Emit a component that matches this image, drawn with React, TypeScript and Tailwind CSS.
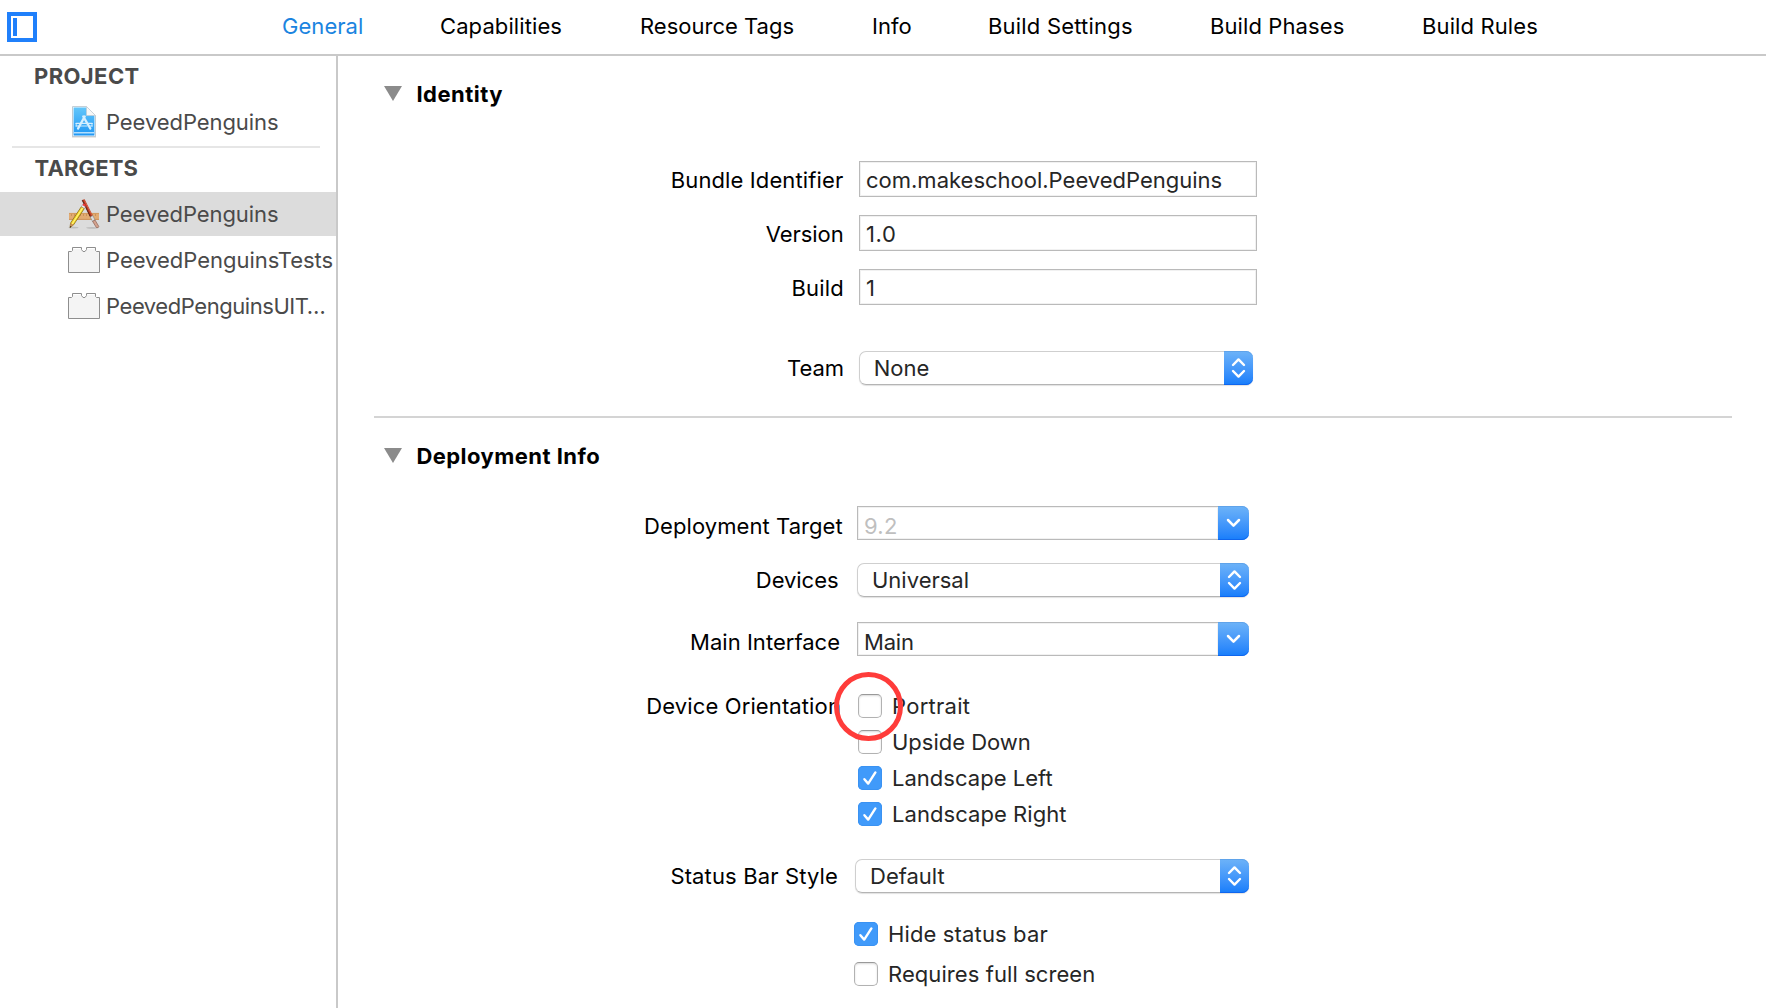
import type { ReactNode } from 'react';

const tabs = [
  { name: 'General', cls: 'w-[158px] tracking-[0.05px] text-[#1b84e0]' },
  { name: 'Capabilities', cls: 'w-[200px] tracking-[0.1px]' },
  { name: 'Resource Tags', cls: 'w-[232px]' },
  { name: 'Info', cls: 'w-[116px]' },
  { name: 'Build Settings', cls: 'w-[222px] tracking-[0.2px]' },
  { name: 'Build Phases', cls: 'w-[212px] tracking-[0.1px]' },
  { name: 'Build Rules', cls: 'tracking-[0.12px]' },
];

function PanelIcon() {
  return (
    <div className="h-[30px] w-[30px] border-4 border-[#2080fb] p-0.5">
      <div className="h-[18px] w-1 bg-[#2080fb]" />
    </div>
  );
}

function ProjectIcon() {
  return (
    <svg width="28" height="34" viewBox="0 0 28 34" className="relative top-px block">
      <defs>
        <linearGradient id="doc" x1="0" y1="0" x2="0" y2="1">
          <stop offset="0" stopColor="#63c6fa" />
          <stop offset="1" stopColor="#1f97f4" />
        </linearGradient>
      </defs>
      <path d="M2 2H17L26 11V32.4H2Z" fill="#9a9a9a" opacity="0.45" />
      <path d="M2.5 1.5H16.5L25.5 10.5V31.5H2.5Z" fill="#eef8ff" stroke="#b9c4cc" strokeWidth="0.8" />
      <path d="M3.6 2.6H16.4L24.4 10.6V30.4H3.6Z" fill="url(#doc)" />
      <path d="M16.5 1.5V10.5H25.5Z" fill="#f7f7f7" stroke="#c2ccd2" strokeWidth="0.7" />
      <path d="M4 27.8H24" stroke="#d9f0ff" strokeWidth="1.2" />
      <g stroke="#d5efff" fill="none" strokeLinecap="round">
        <path d="M14.8 11.4L8 23.6M13.2 11.4L20.4 23.6" strokeWidth="2.2" />
        <path d="M6 18.4H22.2M6 21H10M18.4 21H22.2" strokeWidth="1.2" />
        <path d="M6.2 18.4V21M22 18.4V21M11 21H17" strokeWidth="0.9" />
      </g>
    </svg>
  );
}

function AppIcon() {
  return (
    <svg width="32" height="32" viewBox="0 0 32 32" className="block">
      <ellipse cx="5.5" cy="29.6" rx="5" ry="0.9" fill="#000" opacity="0.14" />
      <ellipse cx="24" cy="29.8" rx="6" ry="0.9" fill="#000" opacity="0.14" />
      <rect x="1" y="15" width="30" height="6.8" fill="#e2ab72" />
      <path d="M1 15.4H31" stroke="#cf965a" strokeWidth="0.8" />
      <path d="M1 21.4H31" stroke="#c98a50" strokeWidth="0.8" />
      <path d="M3.5 16V18M6.5 16V18M9.5 16V18M12.5 16V18M15.5 16V18M18.5 16V18M21.5 16V18M24.5 16V18M27.5 16V18" stroke="#bd8650" strokeWidth="0.7" />
      <path d="M14 2L16.6 1.2L24.8 17.6L22.2 19Z" fill="#b5391f" />
      <path d="M14.2 2.2L22.4 18.8" stroke="#4a1b12" strokeWidth="0.9" />
      <path d="M16.4 2.4L24.2 17.6" stroke="#df6a4c" strokeWidth="0.8" />
      <path d="M22.2 19L24.8 17.6L27 22L24.6 23.4Z" fill="#dcdcdc" stroke="#777" strokeWidth="0.5" />
      <path d="M24.6 23.4L27 22L30.8 28.4Q30.6 30.4 28.4 29.6Z" fill="#d3a28e" stroke="#7f5344" strokeWidth="0.6" />
      <path d="M13.4 8.6L16.4 10.4L5.6 26.8L2 29.6L2.6 25Z" fill="#f8dd2c" stroke="#7a5a10" strokeWidth="0.7" />
      <path d="M14.6 10L4.2 26" stroke="#fff48a" strokeWidth="1" />
      <path d="M2.6 25L5.6 26.8L2 29.6Z" fill="#c98e58" />
      <path d="M2.1 28L3.4 28.7L1.9 29.8Z" fill="#2d2018" />
      <path d="M13.4 8.6L14.4 6.9L17.4 8.7L16.4 10.4Z" fill="#efefef" stroke="#888" strokeWidth="0.4" />
      <path d="M14.4 6.9Q15.2 5.2 16.8 6Q18.2 7 17.4 8.7Z" fill="#f03a3e" />
    </svg>
  );
}

function BrickIcon() {
  return (
    <svg width="32" height="26" viewBox="0 0 32 26" className="block">
      <path
        d="M0.5 25.5V4.5H3.5L4.5 3.5V0.5H13.5V2.5L15 4.5H17L18.5 2.5V0.5H27.5V3.5L28.5 4.5H31.5V25.5Z"
        fill="#f4f4f4"
        stroke="#8e8e8e"
      />
      <path d="M5.5 1.5H12.5M19.5 1.5H26.5" stroke="#fff" />
    </svg>
  );
}

function Target({ icon, name, cls = '', selected = false }: { icon: ReactNode; name: string; cls?: string; selected?: boolean }) {
  return (
    <div className={selected ? 'flex h-11 items-center bg-[#dcdcdc]' : 'flex h-11 items-center'}>
      <div className="ml-[68px] flex w-8 justify-center">{icon}</div>
      <span className={`ml-[6px] whitespace-nowrap ${cls}`}>{name}</span>
    </div>
  );
}

function Section({ title, cls }: { title: string; cls: string }) {
  return (
    <div className="flex pl-[46px]">
      <svg width="18" height="15" viewBox="0 0 18 15" className="mt-1.5 block">
        <path d="M0 0H18L9 15Z" fill="#8b8b8b" />
      </svg>
      <h2 className={`ml-[14.4px] font-bold ${cls}`}>{title}</h2>
    </div>
  );
}

function Row({ label, labelCls, children }: { label: string; labelCls: string; children: ReactNode }) {
  return (
    <div className="flex items-start">
      <label className={`text-right whitespace-nowrap ${labelCls}`}>{label}</label>
      {children}
    </div>
  );
}

function Field({ value, cls = '' }: { value: string; cls?: string }) {
  return (
    <div className="h-9 w-[398px] border border-[#bababa] pt-1 pl-[6px] text-[#262626] shadow-[inset_0_0_0_1px_#f1f1f1]">
      <div className={cls}>{value}</div>
    </div>
  );
}

const blue = 'bg-linear-to-b from-[#6db3f8] to-[#157dfb] shadow-[inset_0_1px_0_#5fa3ea,inset_0_-1px_0_#0f66ee]';

function Popup({ value, width, cls }: { value: string; width: string; cls: string }) {
  return (
    <div className={`flex h-[34px] rounded-[7px] shadow-[0_1px_1px_rgba(0,0,0,0.12)] ${width}`}>
      <div className="h-full flex-1 rounded-l-[7px] border border-r-0 border-[#cfcfcf] border-b-[#b4b4b4] pt-0.5 text-[#262626]">
        <div className={cls}>{value}</div>
      </div>
      <div className={`flex h-full w-[29px] items-center justify-center rounded-r-[7px] ${blue}`}>
        <svg width="15" height="22" viewBox="0 0 15 22" fill="none" stroke="#fff" strokeWidth="2.4" strokeLinecap="round" strokeLinejoin="round">
          <path d="M2 8L7.5 2.4L13 8M2 14L7.5 19.6L13 14" />
        </svg>
      </div>
    </div>
  );
}

function Combo({ value, cls }: { value: string; cls: string }) {
  return (
    <div className="flex h-[34px] w-[392px]">
      <div className="h-full flex-1 border border-r-0 border-[#bababa] pt-[5px] pl-[6px] shadow-[inset_0_0_0_1px_#f1f1f1]">
        <div className={cls}>{value}</div>
      </div>
      <div className={`flex h-full w-[31px] items-center justify-center rounded-r-[7px] ${blue}`}>
        <svg width="15" height="10" viewBox="0 0 15 10" fill="none" stroke="#fff" strokeWidth="2.5" strokeLinecap="round" strokeLinejoin="round">
          <path d="M2 2L7.5 7.6L13 2" />
        </svg>
      </div>
    </div>
  );
}

function Check({ label, checked = false, cls = '' }: { label: string; checked?: boolean; cls?: string }) {
  return (
    <div className="flex items-start text-[#262626]">
      {checked ? (
        <div className="mt-0.5 h-6 w-6 rounded-[5px] bg-[#409afa] shadow-[inset_0_0_0_1px_#3a92f2]">
          <svg width="24" height="24" viewBox="0 0 24 24" fill="none" stroke="#fff" strokeWidth="2.4" strokeLinecap="round" strokeLinejoin="round">
            <path d="M6.4 13.2L10.2 17.6L17.4 6.4" />
          </svg>
        </div>
      ) : (
        <div className="mt-0.5 h-6 w-6 rounded-[5px] border border-[#b2b2b2] border-t-[#999] shadow-[inset_0_1px_2px_rgba(0,0,0,0.15)]" />
      )}
      <span className={`ml-[10px] whitespace-nowrap ${cls}`}>{label}</span>
    </div>
  );
}

export default function App() {
  return (
    <div className="flex h-[1008px] w-[1766px] flex-col overflow-hidden bg-white font-[Inter,sans-serif] text-[22px] leading-7 text-black">
      <header className="flex h-14 shrink-0 border-b-2 border-[#c9c9c9]">
        <div className="w-[275px] pt-3 pl-[7px]">
          <PanelIcon />
        </div>
        <nav className="flex pt-3 pl-[7px]">
          {tabs.map((t) => (
            <div key={t.name} className={`whitespace-nowrap ${t.cls}`}>
              {t.name}
            </div>
          ))}
        </nav>
      </header>

      <div className="flex min-h-0 flex-1">
        <aside className="w-[338px] shrink-0 border-r-2 border-[#c9c9c9] text-[#4a4a4a]">
          <div className="pt-1.5 pl-[34px] font-bold tracking-[0.4px]">PROJECT</div>
          <div className="mt-[9px]">
            <Target icon={<ProjectIcon />} name="PeevedPenguins" cls="pt-px tracking-[-0.08px]" />
          </div>
          <div className="mt-[3px] mr-4 ml-3 h-0.5 bg-[#e6e6e6]" />
          <div className="mt-1.5 pl-[34.5px] font-bold tracking-[0.15px]">TARGETS</div>
          <div className="mt-2.5 flex flex-col gap-0.5">
            <Target icon={<AppIcon />} name="PeevedPenguins" cls="-mt-px tracking-[-0.08px]" selected />
            <Target icon={<BrickIcon />} name="PeevedPenguinsTests" cls="-mt-px tracking-[-0.02px]" />
            <Target icon={<BrickIcon />} name="PeevedPenguinsUIT…" cls="-mt-px tracking-[-0.44px]" />
          </div>
        </aside>

        <main className="flex-1 pt-6">
          <Section title="Identity" cls="tracking-[0.48px]" />
          <div className="mt-[53px] flex flex-col gap-[18px]">
            <Row label="Bundle Identifier" labelCls="pt-[5px] mr-[15.7px] w-[505.3px] tracking-[0.12px]">
              <Field value="com.makeschool.PeevedPenguins" />
            </Row>
            <Row label="Version" labelCls="pt-[5px] mr-[15.3px] w-[505.7px] tracking-[-0.05px]">
              <Field value="1.0" cls="tracking-[0.6px]" />
            </Row>
            <Row label="Build" labelCls="pt-[5px] mr-[15px] w-[506px] tracking-[0.2px]">
              <Field value="1" />
            </Row>
          </div>
          <div className="mt-[46px]">
            <Row label="Team" labelCls="pt-[3px] mr-[15px] w-[506px] tracking-[-0.06px]">
              <Popup value="None" width="w-[394px]" cls="pl-[13.7px]" />
            </Row>
          </div>

          <div className="mt-[31px] mr-[34px] ml-9 h-0.5 bg-[#d4d4d4]" />

          <div className="mt-6">
            <Section title="Deployment Info" cls="tracking-[0.45px]" />
          </div>
          <div className="mt-9">
            <Row label="Deployment Target" labelCls="pt-[6px] mr-[14.2px] w-[504.8px] tracking-[0.07px]">
              <Combo value="9.2" cls="tracking-[0.29px] text-[#bfbfbf]" />
            </Row>
          </div>
          <div className="mt-[23px]">
            <Row label="Devices" labelCls="pt-[3px] mr-[18.5px] w-[500.5px] tracking-[-0.04px]">
              <Popup value="Universal" width="w-[392px]" cls="pl-[14px]" />
            </Row>
          </div>
          <div className="mt-[25px]">
            <Row label="Main Interface" labelCls="pt-[6px] mr-[16.9px] w-[502.1px] tracking-[0.03px]">
              <Combo value="Main" cls="tracking-[-0.2px] text-[#262626]" />
            </Row>
          </div>
          <div className="mt-9">
            <Row label="Device Orientation" labelCls="mr-[17px] w-[503px] tracking-[0.12px]">
              <div className="relative flex flex-col gap-2">
                <Check label="Portrait" cls="tracking-[0.26px]" />
                <Check label="Upside Down" cls="tracking-[-0.02px]" />
                <Check label="Landscape Left" checked cls="tracking-[0.02px]" />
                <Check label="Landscape Right" checked cls="tracking-[0.06px]" />
                <div className="absolute -top-5 left-[-24px] h-[69px] w-[69px] rounded-full border-5 border-[#ff3c3a]" />
              </div>
            </Row>
          </div>
          <div className="mt-[31px]">
            <Row label="Status Bar Style" labelCls="pt-[3px] mr-[17px] w-[500px] tracking-[0.14px]">
              <Popup value="Default" width="w-[394px]" cls="pl-[14px]" />
            </Row>
          </div>
          <div className="mt-[27px] flex flex-col gap-3 pl-[516px]">
            <Check label="Hide status bar" checked cls="tracking-[0.14px]" />
            <Check label="Requires full screen" cls="tracking-[0.08px]" />
          </div>
        </main>
      </div>
    </div>
  );
}
